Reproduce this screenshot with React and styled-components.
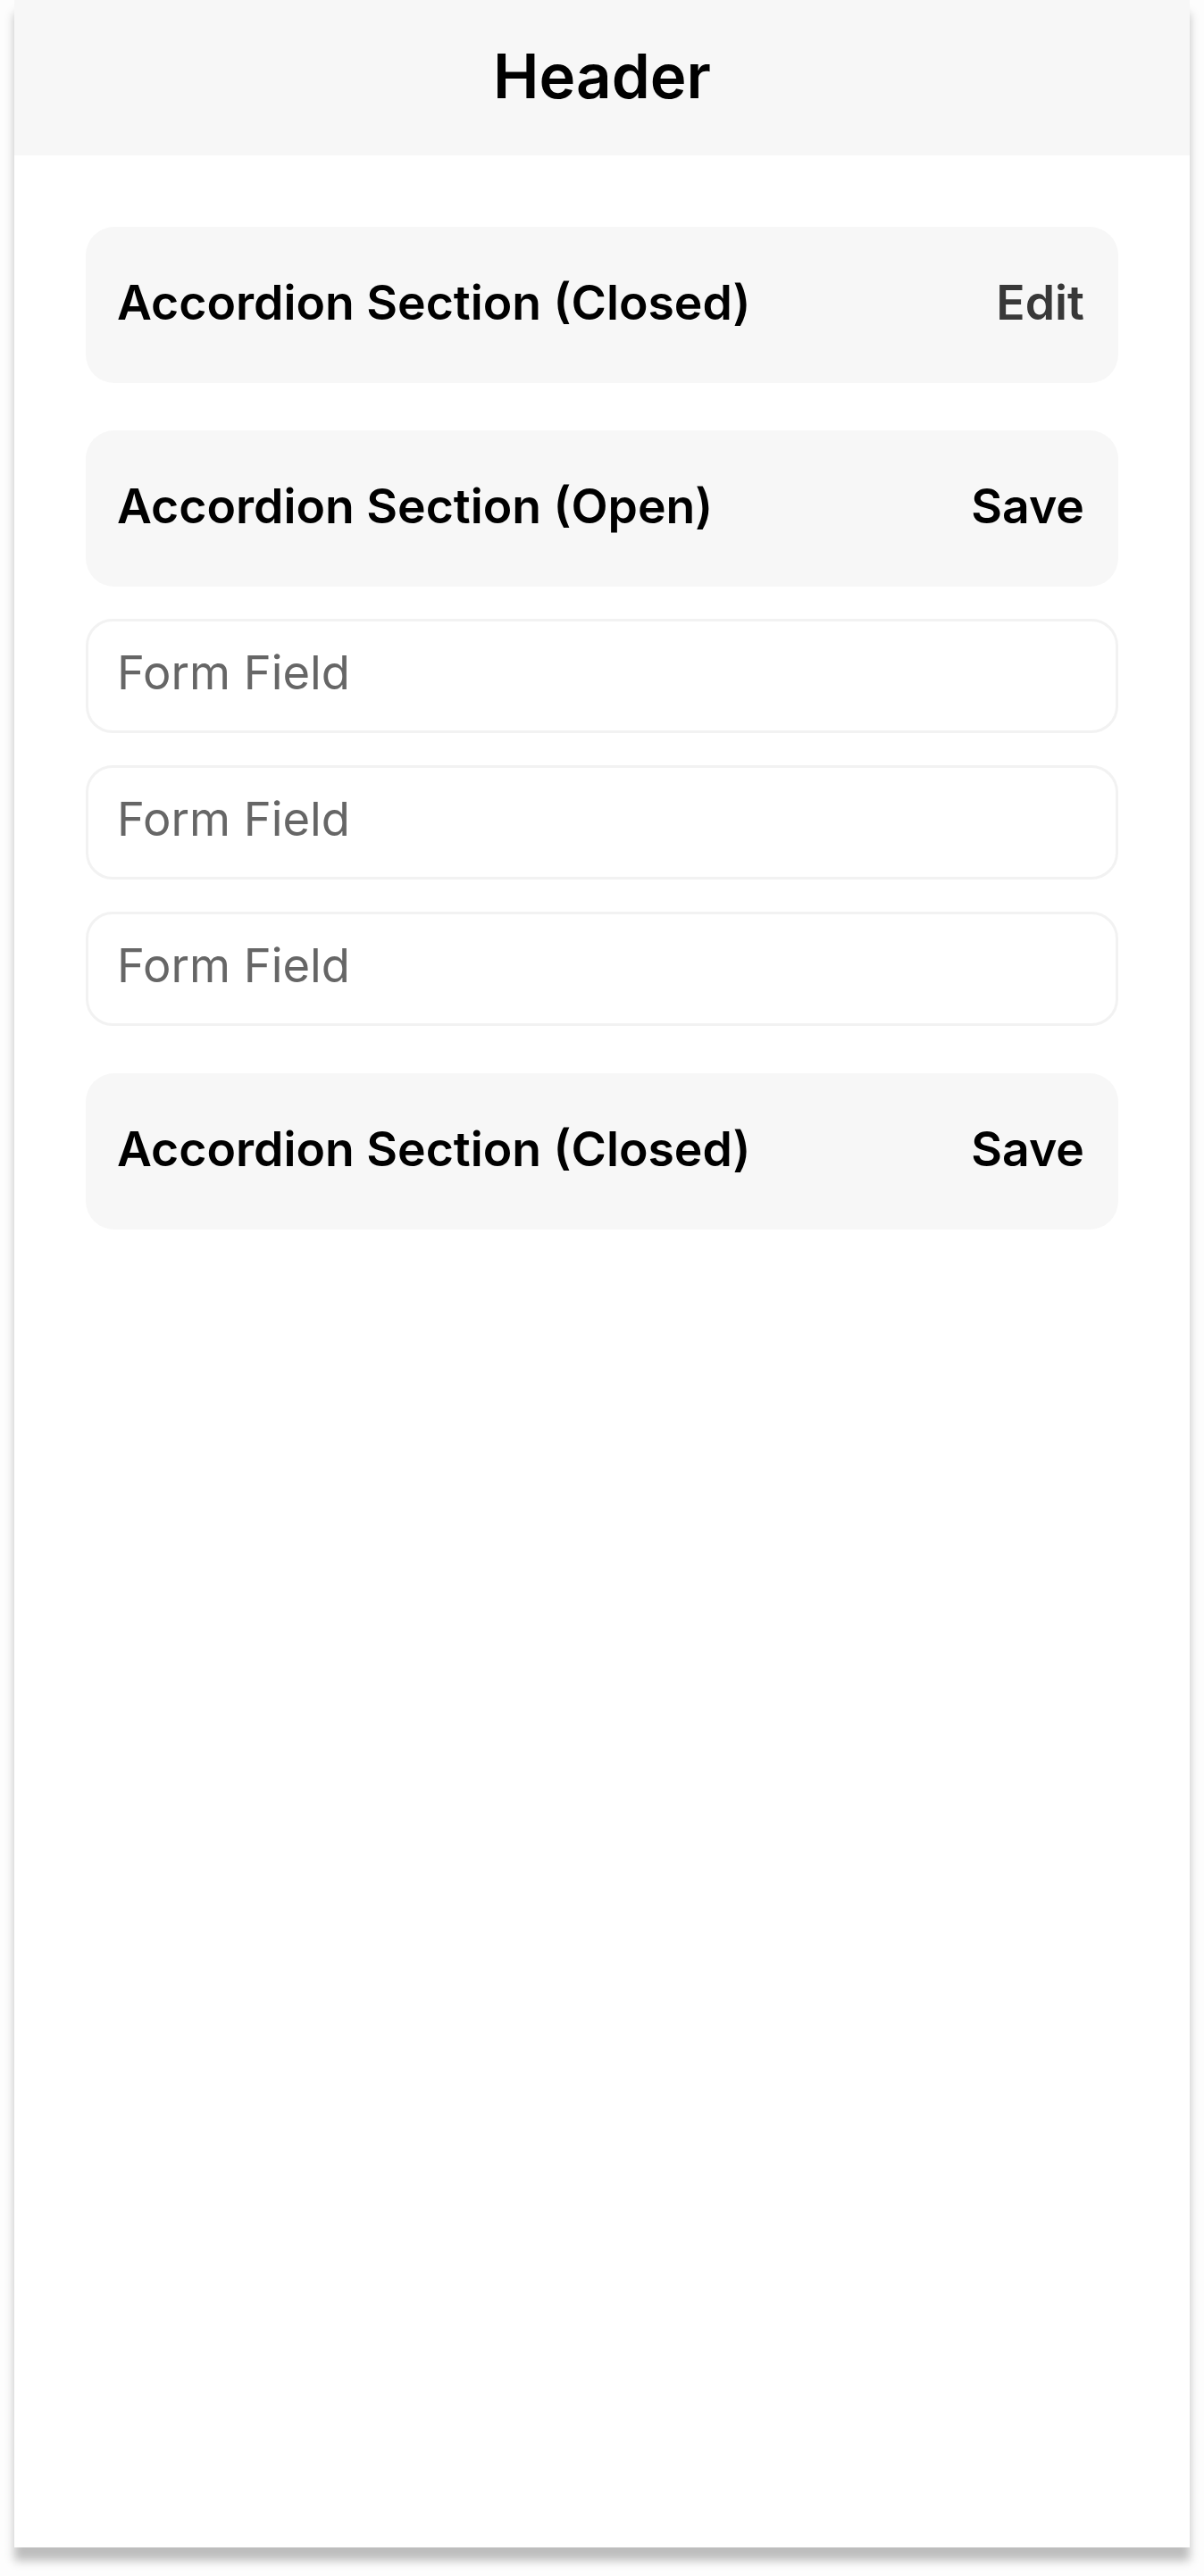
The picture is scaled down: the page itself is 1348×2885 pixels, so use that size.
import styled, { createGlobalStyle } from "styled-components";

const Global = createGlobalStyle`
  body {
    margin: 0;
    background: #fdfdfd;
    font-family: Inter, "Noto Sans", sans-serif;
  }
`;

const Page = styled.div`
  padding: 0 16px 32px;
`;

const Frame = styled.div`
  height: 2853px;
  background: #fff;
  box-shadow: 0 15px 10px rgba(0, 0, 0, 0.25);
  display: flex;
  flex-direction: column;
`;

const Header = styled.header`
  height: 174px;
  box-sizing: border-box;
  padding-bottom: 4px;
  background: #f7f7f7;
  display: flex;
  align-items: center;
  justify-content: center;
`;

const Title = styled.h1`
  margin: 0;
  font-size: 69px;
  font-weight: 600;
  color: #000;
`;

const Content = styled.main`
  padding: 80px 80px;
  display: flex;
  flex-direction: column;
  gap: 53px;
`;

const Section = styled.section`
  display: flex;
  flex-direction: column;
  gap: 36px;
`;

const SectionHead = styled.div`
  height: 175px;
  box-sizing: border-box;
  background: #f7f7f7;
  border-radius: 32px;
  padding: 0 38px 6px 35px;
  display: flex;
  align-items: center;
  justify-content: space-between;
`;

const SectionTitle = styled.span`
  font-size: 53.5px;
  font-weight: 600;
  color: #000;
`;

const Action = styled.span`
  font-size: 53.5px;
  font-weight: 600;
  color: ${(p) => (p.$muted ? "#383838" : "#000")};
`;

const Field = styled.div`
  height: 128px;
  box-sizing: border-box;
  border: 3px solid #f2f2f2;
  border-radius: 30px;
  padding: 0 33px 8px 32px;
  display: flex;
  align-items: center;
  font-size: 52.5px;
  color: #666;
`;

export default function App() {
  return (
    <>
      <Global />
      <Page>
        <Frame>
          <Header>
            <Title>Header</Title>
          </Header>
          <Content>
            <SectionHead>
              <SectionTitle>Accordion Section (Closed)</SectionTitle>
              <Action $muted>Edit</Action>
            </SectionHead>
            <Section>
              <SectionHead>
                <SectionTitle>Accordion Section (Open)</SectionTitle>
                <Action>Save</Action>
              </SectionHead>
              <Field>Form Field</Field>
              <Field>Form Field</Field>
              <Field>Form Field</Field>
            </Section>
            <SectionHead>
              <SectionTitle>Accordion Section (Closed)</SectionTitle>
              <Action>Save</Action>
            </SectionHead>
          </Content>
        </Frame>
      </Page>
    </>
  );
}
